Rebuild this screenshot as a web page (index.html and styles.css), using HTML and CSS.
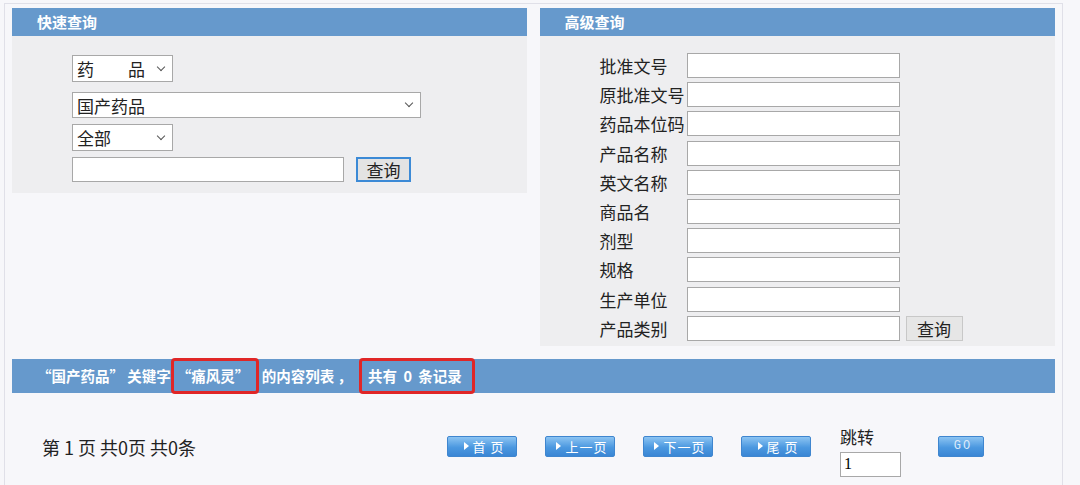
FILE: index.html
```html
<!DOCTYPE html>
<html>
  <head>
    <title>药品查询</title>
    <meta charset="UTF-8" />
    <link rel="stylesheet" href="styles.css">
  </head>
  <body>
    <div class="frame">
      <div class="panels">
        <div class="panel quick">
          <div class="panel-head">快速查询</div>
          <div class="panel-body">
            <span class="sel-wrap sel-short"><select class="sel"><option>药　　品</option></select></span>
            <span class="sel-wrap sel-long"><select class="sel"><option>国产药品</option></select></span>
            <span class="sel-wrap sel-short sel-third"><select class="sel"><option>全部</option></select></span>
            <div class="search-row">
              <input type="text" class="kw" />
              <button class="btn btn-focus">查询</button>
            </div>
          </div>
        </div>
        <div class="panel adv">
          <div class="panel-head">高级查询</div>
          <div class="panel-body">
            <div class="adv-grid">
              <label>批准文号</label><input type="text" /><span></span>
              <label>原批准文号</label><input type="text" /><span></span>
              <label>药品本位码</label><input type="text" /><span></span>
              <label>产品名称</label><input type="text" /><span></span>
              <label>英文名称</label><input type="text" /><span></span>
              <label>商品名</label><input type="text" /><span></span>
              <label>剂型</label><input type="text" /><span></span>
              <label>规格</label><input type="text" /><span></span>
              <label>生产单位</label><input type="text" /><span></span>
              <label>产品类别</label><input type="text" /><button class="btn">查询</button>
            </div>
          </div>
        </div>
      </div>
      <div class="result-bar">
        <span>“国产药品” 关键字</span><span class="mark mark-kw">“痛风灵”</span><span class="plain">的内容列表 ，</span><span class="mark mark-count">共有 0 条记录</span>
      </div>
      <div class="pager">
        <div class="pg-info">第 1 页 共0页 共0条</div>
        <button class="pg"><i></i>首 页</button>
        <button class="pg"><i></i>上一页</button>
        <button class="pg"><i></i>下一页</button>
        <button class="pg"><i></i>尾 页</button>
        <div class="jump">
          <span>跳转</span>
          <input type="text" value="1" />
        </div>
        <button class="pg pg-go">GO</button>
      </div>
    </div>
  </body>
</html>
```
FILE: styles.css
```css
body {
  margin: 0;
  background: #f7f7fa;
  font-family: "Noto Sans CJK SC", "Liberation Sans", sans-serif;
  color: #222;
}
.frame {
  margin: 3px 0 0 4px;
  width: 1043px;
  height: 478px;
  border: 1px solid #e0e0e8;
  border-bottom: 0;
  padding: 4px 7px 0 7px;
  background: #f7f7fa;
}
.panels {
  display: flex;
  align-items: flex-start;
  gap: 13px;
}
.panel {
  background: #eeeef0;
}
.quick {
  width: 515px;
}
.adv {
  width: 516px;
}
.panel-head {
  height: 28px;
  line-height: 28px;
  background: #6699cc;
  color: #fff;
  font-size: 15px;
  font-weight: bold;
  padding-left: 25px;
}
.quick .panel-body {
  padding: 19px 0 11px 60px;
  display: flex;
  flex-direction: column;
  align-items: flex-start;
}
.sel-wrap {
  position: relative;
  display: block;
  height: 27px;
}
.sel-wrap::after {
  content: "";
  position: absolute;
  right: 9px;
  top: 9px;
  width: 5px;
  height: 5px;
  border-right: 1px solid #555;
  border-bottom: 1px solid #555;
  transform: rotate(45deg);
  pointer-events: none;
}
.sel {
  appearance: none;
  box-sizing: border-box;
  width: 100%;
  height: 100%;
  font-family: inherit;
  font-size: 17px;
  border: 1px solid #a8a8a8;
  background: #fff;
  color: #222;
  padding: 0 4px;
}
.sel-short {
  width: 101px;
}
.sel-long {
  width: 349px;
  height: 26px;
  margin-top: 10px;
}
.sel-long::after {
  top: 8px;
}
.sel-third {
  margin-top: 6px;
}
.search-row {
  margin-top: 6px;
  display: flex;
  gap: 12px;
}
input[type="text"] {
  box-sizing: border-box;
  height: 25px;
  border: 1px solid #a8a8a8;
  background: #fff;
  font-family: inherit;
  padding: 0 3px;
}
.kw {
  width: 272px;
}
.btn {
  height: 25px;
  width: 55px;
  padding: 0;
  font-family: inherit;
  font-size: 17px;
  line-height: 21px;
  color: #222;
  background: #e6e6e6;
  border: 1px solid #c8c8c8;
}
.btn-focus {
  border: 2px solid #3c8ad6;
  background: #e3e3e3;
}
.adv .panel-body {
  padding: 17px 0 5px 60px;
}
.adv-grid {
  display: grid;
  grid-template-columns: 87px 213px 63px;
  grid-auto-rows: 25px;
  row-gap: 4.2px;
  align-items: center;
}
.adv-grid label {
  font-size: 17px;
  white-space: nowrap;
  line-height: 25px;
}
.adv-grid input {
  width: 213px;
}
.adv-grid .btn {
  width: 57px;
  margin-left: 6px;
}
.result-bar {
  margin-top: 13px;
  height: 34px;
  background: #6699cc;
  color: #fff;
  font-size: 14.5px;
  font-weight: bold;
  display: flex;
  align-items: center;
  padding-left: 25px;
  white-space: pre;
}
.mark {
  box-sizing: border-box;
  height: 36px;
  display: flex;
  align-items: center;
  border: 3px solid #e02626;
  border-radius: 4px;
}
.mark-kw {
  width: 88px;
  padding-left: 3px;
}
.plain {
  padding: 0 7px 0 3px;
}
.mark-count {
  width: 116px;
  padding-left: 6px;
  word-spacing: 3px;
}
.pager {
  display: flex;
  align-items: center;
  padding: 31px 0 0 30px;
}
.pg-info {
  width: 405px;
  font-size: 18px;
  margin-bottom: 6px;
}
.pg {
  width: 70px;
  height: 21px;
  margin-right: 28px;
  margin-bottom: 8px;
  padding: 0 0 0 4px;
  border: 1px solid #3f86cf;
  border-radius: 2px;
  background: linear-gradient(#8cc4f2, #4b98e0 55%, #3a86d4);
  color: #fff;
  font-family: inherit;
  font-size: 13px;
  letter-spacing: 1px;
  display: flex;
  align-items: center;
  justify-content: center;
  gap: 4px;
}
.pg i {
  width: 0;
  height: 0;
  border-left: 5px solid #fff;
  border-top: 4px solid transparent;
  border-bottom: 4px solid transparent;
}
.jump {
  display: flex;
  flex-direction: column;
  font-size: 17px;
  margin-right: 37px;
  margin-left: 1px;
}
.jump input {
  width: 61px;
  margin-top: 3px;
  font-size: 16px;
  font-family: "Liberation Serif", serif;
}
.pg-go {
  width: 46px;
  font-size: 12px;
  font-family: "Liberation Mono", monospace;
  letter-spacing: 2px;
  color: #dceafa;
}
```
